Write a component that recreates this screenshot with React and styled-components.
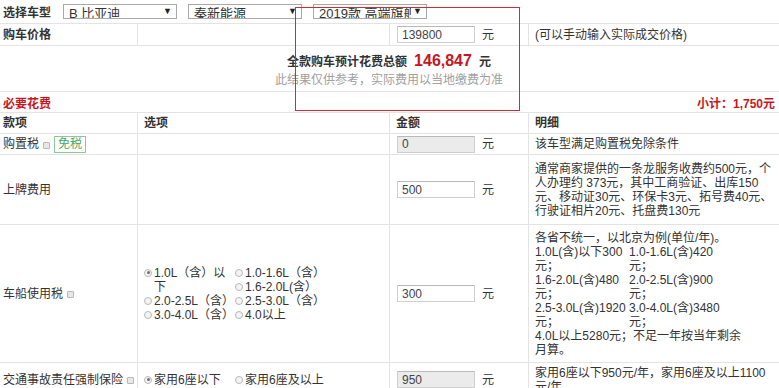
import React from "react";
import styled, { createGlobalStyle } from "styled-components";

const GlobalStyle = createGlobalStyle`
  body {
    margin: 0;
    background: #fff;
    font-family: "Liberation Sans", "Noto Sans CJK SC", sans-serif;
    font-size: 12px;
    color: #333;
  }
`;

const Page = styled.div`
  position: relative;
  width: 779px;
  overflow: hidden;
`;

const Table = styled.div`
  display: grid;
  grid-template-columns: 138px 252px 139px 1fr;
  grid-template-rows: 24px 22px 46px 21px 21px 21px 70px 138px 34px;
`;

const Cell = styled.div`
  display: flex;
  align-items: center;
  padding: 0 ${(p) => p.$pr || "4px"} 0 ${(p) => p.$pl || "6px"};
  border-bottom: 1px solid #e3e3e3;
  border-right: ${(p) => (p.$last ? "none" : "1px solid #e3e3e3")};
  line-height: 14px;
  font-weight: ${(p) => (p.$bold ? "bold" : "normal")};
  min-width: 0;
`;

const Label = styled(Cell).attrs({ $pl: "3px", $pr: "0" })`
  white-space: nowrap;
`;

const FullRow = styled.div`
  grid-column: 1 / -1;
  display: flex;
  align-items: center;
  border-bottom: 1px solid #e3e3e3;
  padding: 0 4px 0 3px;
`;

const TopBar = styled(FullRow)`
  gap: 11px;
`;

const Strong = styled.span`
  font-weight: bold;
  color: #333;
  margin-right: 1px;
`;

const Select = styled.div`
  width: 114px;
  height: 15px;
  box-sizing: border-box;
  border: 1px solid #a9a9a9;
  display: flex;
  align-items: center;
  justify-content: space-between;
  padding: 0 4px 0 5px;
  font-size: 13px;
  line-height: 13px;
  overflow: hidden;
  color: #333;
`;

const SelectText = styled.span`
  white-space: nowrap;
  overflow: hidden;
  flex: 1;
  min-width: 0;
  margin-top: 3px;
`;

const Arrow = styled.span`
  font-size: 9px;
  color: #222;
  background: #fff;
  padding-left: 2px;
`;

const Summary = styled(FullRow)`
  flex-direction: column;
  justify-content: center;
  padding-top: 2px;
`;

const Total = styled.div`
  font-weight: bold;
  line-height: 20px;
  display: flex;
  align-items: baseline;
  gap: 7px;
`;

const Amount = styled.span`
  font-size: 16px;
  color: #c8161d;
`;

const Hint = styled.div`
  color: #a0a0a0;
  line-height: 16px;
`;

const SectionRow = styled(FullRow)`
  justify-content: space-between;
  color: #c8161d;
  font-weight: bold;
`;

const Field = styled.input`
  width: 78px;
  height: 17px;
  box-sizing: border-box;
  border: 1px solid #cfcfcf;
  border-top-color: #b9b9b9;
  padding: 0 4px;
  font-family: "Liberation Sans", sans-serif;
  font-size: 12px;
  color: #444;
  background: ${(p) => (p.disabled ? "#ebebeb" : "#fff")};
  margin: 0 7px 0 1px;
  outline: none;
`;

const Unit = styled.span`
  color: #333;
`;

const InfoIcon = styled.span`
  display: inline-block;
  flex-shrink: 0;
  width: 5px;
  height: 5px;
  border: 1px solid #b8b8b8;
  background: #e8e8e8;
  border-radius: 1px;
  margin-left: 4px;
  margin-top: 2px;
`;

const Tag = styled.span`
  border: 1px solid #8cc89c;
  color: #4aa866;
  padding: 0 3px;
  line-height: 15px;
  margin-left: 4px;
`;

const RadioGrid = styled.div`
  display: grid;
  grid-template-columns: 91px 91px;
  line-height: 14px;
`;

const Radio = styled.div`
  grid-row: ${(p) => (p.$tall ? "span 2" : "auto")};
  padding-left: 10px;
  position: relative;
`;

const Dot = styled.span`
  position: absolute;
  left: 0;
  top: 3px;
  width: 6px;
  height: 6px;
  border-radius: 50%;
  border: 1px solid #b9b9b9;
  background: #f4f4f4;

  &::after {
    content: "";
    display: ${(p) => (p.$on ? "block" : "none")};
    position: absolute;
    left: 1.5px;
    top: 1.5px;
    width: 3px;
    height: 3px;
    border-radius: 50%;
    background: #6f6f6f;
  }
`;

const Detail = styled.div`
  line-height: 14px;
  width: ${(p) => p.$width || "100%"};
`;

const PriceGrid = styled.div`
  display: grid;
  grid-template-columns: 94px 94px;
`;

const Frame = styled.div`
  position: absolute;
  left: 295px;
  top: 7px;
  width: 223px;
  height: 102px;
  border: 1px solid #cf2a35;
  pointer-events: none;
`;

const taxOptions = [
  { text: "1.0L（含）以下", on: true, tall: true },
  { text: "1.0-1.6L（含）" },
  { text: "1.6-2.0L(含）" },
  { text: "2.0-2.5L（含）" },
  { text: "2.5-3.0L（含）" },
  { text: "3.0-4.0L（含）" },
  { text: "4.0以上" },
];

const taxPrices = [
  "1.0L(含)以下300元；",
  "1.0-1.6L(含)420元；",
  "1.6-2.0L(含)480元；",
  "2.0-2.5L(含)900元；",
  "2.5-3.0L(含)1920元；",
  "3.0-4.0L(含)3480元；",
];

const RadioItem = ({ text, on, tall }) => (
  <Radio $tall={tall}>
    <Dot $on={on} />
    {text}
  </Radio>
);

export default function App() {
  return (
    <Page>
      <GlobalStyle />
      <Table>
        <TopBar>
          <Strong>选择车型</Strong>
          <Select>
            <SelectText>B 比亚迪</SelectText>
            <Arrow>▼</Arrow>
          </Select>
          <Select>
            <SelectText>秦新能源</SelectText>
            <Arrow>▼</Arrow>
          </Select>
          <Select>
            <SelectText>2019款 高端旗舰版</SelectText>
            <Arrow>▼</Arrow>
          </Select>
        </TopBar>

        <Label $bold>购车价格</Label>
        <Cell />
        <Cell>
          <Field defaultValue="139800" />
          <Unit>元</Unit>
        </Cell>
        <Cell $last>(可以手动输入实际成交价格)</Cell>

        <Summary>
          <Total>
            <span>全款购车预计花费总额</span>
            <Amount>146,847</Amount>
            <span>元</span>
          </Total>
          <Hint>此结果仅供参考，实际费用以当地缴费为准</Hint>
        </Summary>

        <SectionRow>
          <span>必要花费</span>
          <span>小计：1,750元</span>
        </SectionRow>

        <Label $bold>款项</Label>
        <Cell $bold>选项</Cell>
        <Cell $bold>金额</Cell>
        <Cell $bold $last>明细</Cell>

        <Label>
          购置税<InfoIcon />
          <Tag>免税</Tag>
        </Label>
        <Cell />
        <Cell>
          <Field defaultValue="0" disabled />
          <Unit>元</Unit>
        </Cell>
        <Cell $last>该车型满足购置税免除条件</Cell>

        <Label>上牌费用</Label>
        <Cell />
        <Cell>
          <Field defaultValue="500" />
          <Unit>元</Unit>
        </Cell>
        <Cell $last>
          <Detail>
            通常商家提供的一条龙服务收费约500元，个人办理约 373元，其中工商验证、出库150元、移动证30元、环保卡3元、拓号费40元、行驶证相片20元、托盘费130元
          </Detail>
        </Cell>

        <Label>
          车船使用税<InfoIcon />
        </Label>
        <Cell>
          <RadioGrid>
            {taxOptions.map((o) => (
              <RadioItem key={o.text} {...o} />
            ))}
          </RadioGrid>
        </Cell>
        <Cell>
          <Field defaultValue="300" />
          <Unit>元</Unit>
        </Cell>
        <Cell $last>
          <Detail $width="212px">
            <div>各省不统一，以北京为例(单位/年)。</div>
            <PriceGrid>
              {taxPrices.map((t) => (
                <span key={t}>{t}</span>
              ))}
            </PriceGrid>
            <div>4.0L以上5280元；不足一年按当年剩余月算。</div>
          </Detail>
        </Cell>

        <Label>
          交通事故责任强制保险<InfoIcon />
        </Label>
        <Cell>
          <RadioGrid>
            <RadioItem text="家用6座以下" on />
            <RadioItem text="家用6座及以上" />
          </RadioGrid>
        </Cell>
        <Cell>
          <Field defaultValue="950" disabled />
          <Unit>元</Unit>
        </Cell>
        <Cell $last>
          <Detail>家用6座以下950元/年，家用6座及以上1100元/年</Detail>
        </Cell>
      </Table>
      <Frame />
    </Page>
  );
}
